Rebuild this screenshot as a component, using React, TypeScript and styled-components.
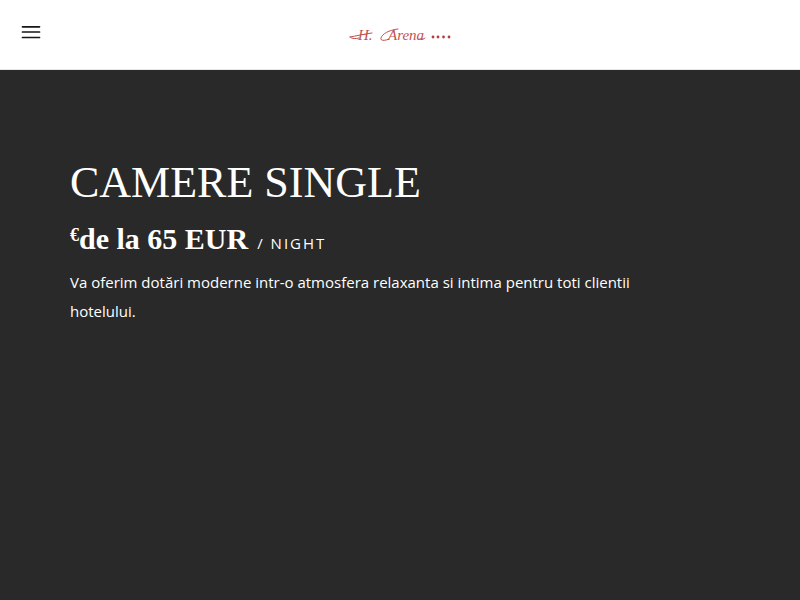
import React from "react";
import styled, { createGlobalStyle } from "styled-components";

const GlobalStyle = createGlobalStyle`
  *, *::before, *::after { box-sizing: border-box; }
  body {
    margin: 0;
    background: #292929;
    color: #fff;
    font-family: "Open Sans", "Noto Sans", sans-serif;
    font-size: 15px;
    line-height: 29px;
  }
`;

const Page = styled.div`
  min-height: 100vh;
  display: flex;
  flex-direction: column;
`;

const Header = styled.header`
  display: grid;
  grid-template-columns: 1fr auto 1fr;
  height: 70px;
  padding: 0 20px;
  background: #fff;
  border-bottom: 1px solid #e6e6e6;
`;

const MenuButton = styled.button`
  display: flex;
  justify-self: start;
  align-self: start;
  margin: 20px 0 0;
  padding: 0;
  border: 0;
  background: none;
  cursor: pointer;
`;

const LogoLink = styled.a`
  display: flex;
  align-self: center;
`;

const LogoText = styled.text`
  font-family: "Liberation Serif", serif;
  font-style: italic;
  font-size: 15px;
  fill: #c4514c;
`;

const Hero = styled.main`
  flex: 1;
  padding: 83px 70px 60px;
  background: #292929;
`;

const Content = styled.section`
  max-width: 600px;
`;

const Title = styled.h1`
  margin: 0 0 8px;
  font-family: "Liberation Serif", serif;
  font-size: 44px;
  font-weight: 400;
  line-height: 60px;
  text-transform: uppercase;
`;

const Price = styled.p`
  display: flex;
  align-items: baseline;
  margin: 0 0 7px;
  line-height: 36px;
`;

const Amount = styled.strong`
  font-family: "Liberation Serif", serif;
  font-size: 30px;
  font-weight: 700;
`;

const Currency = styled.sup`
  font-size: 18px;
  line-height: 0;
  vertical-align: 8px;
`;

const Period = styled.span`
  margin-left: 9px;
  letter-spacing: 2px;
  text-transform: uppercase;
`;

const Description = styled.p`
  margin: 0;
`;

function MenuIcon() {
  return (
    <svg width="22" height="24" viewBox="0 0 22 24" fill="none" stroke="#161616" strokeWidth="1.7" strokeLinecap="round" aria-hidden="true">
      <path d="M2.5 6.8h17M2.500 12h17M2.500 17.500h17" />
    </svg>
  );
}

function Logo() {
  return (
    <svg width="104" height="20" viewBox="0 0 104 20" aria-hidden="true">
      <LogoText x="10" y="15">H.</LogoText>
      <LogoText x="40" y="15">Arena</LogoText>
      <g fill="none" stroke="#c4514c" strokeWidth="1" strokeLinecap="round">
        <path d="M2 12c6-1 14-3 22-4M2 12c2 2 6 2 9 1" />
        <path d="M41 14c-4 2-9 2-8-1 1-4 8-8 17-9M72 14c2 1 4 0 5-1" />
      </g>
      <g fill="#b93c3a">
        <circle cx="85" cy="12" r="1.4" />
        <circle cx="90" cy="12" r="1.4" />
        <circle cx="95.5" cy="12" r="1.4" />
        <circle cx="101" cy="12" r="1.4" />
      </g>
    </svg>
  );
}

export default function App() {
  return (
    <Page>
      <GlobalStyle />
      <Header>
        <MenuButton type="button" aria-label="Menu"><MenuIcon /></MenuButton>
        <LogoLink href="#" aria-label="H. Arena"><Logo /></LogoLink>
      </Header>
      <Hero>
        <Content>
          <Title>Camere Single</Title>
          <Price>
            <Amount><Currency>€</Currency>de la 65 EUR</Amount>
            <Period>/ Night</Period>
          </Price>
          <Description>
            Va oferim dotări moderne intr-o atmosfera relaxanta si intima pentru toti clientii hotelului.
          </Description>
        </Content>
      </Hero>
    </Page>
  );
}
